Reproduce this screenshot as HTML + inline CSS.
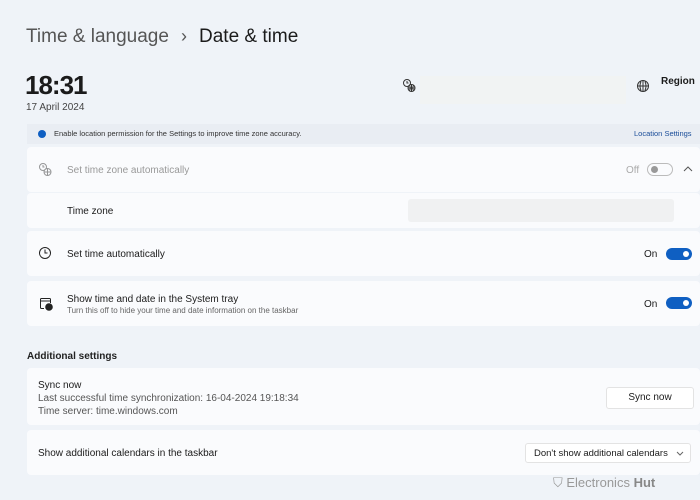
<!DOCTYPE html>
<html><head><style>
body{margin:0;width:700px;height:500px;background:#eff3f8;font-family:"Liberation Sans",sans-serif;position:relative;overflow:hidden;color:#1b1b1b}
.a{position:absolute}
.card{position:absolute;left:27px;width:673px;background:#fafbfd;border-radius:4px}
.t{font-size:10px}
.tog{position:absolute;width:26px;height:12px;border-radius:7px;background:#0f5fc2}
.tog:after{content:"";position:absolute;right:3px;top:3px;width:6px;height:6px;border-radius:50%;background:#fff}
</style></head><body>
<div class="a" style="left:26px;top:26px;font-size:19px;color:#555">Time &amp; language</div>
<div class="a" style="left:181px;top:26px;font-size:18px;color:#555">›</div>
<div class="a" style="left:199px;top:26px;font-size:19px;color:#1b1b1b">Date &amp; time</div>
<div class="a" style="left:25px;top:70px;font-size:26px;font-weight:bold;letter-spacing:-1px">18:31</div>
<div class="a" style="left:26px;top:102px;font-size:10px;color:#444">17 April 2024</div>
<svg class="a" style="left:401px;top:78px" width="16" height="16" viewBox="0 0 16 16" fill="none" stroke="#333" stroke-width="1"><circle cx="6" cy="5" r="3.5"/><path d="M6 3v2h1.5"/><circle cx="10.5" cy="10" r="3.5" fill="#eff3f8"/><path d="M7 10h7M10.5 6.5v7M8.5 7.5q1.5 2.5 0 5M12.5 7.5q-1.5 2.5 0 5"/></svg>
<div class="a" style="left:420px;top:76px;width:206px;height:28px;background:#f1f3f3"></div>
<svg class="a" style="left:636px;top:79px" width="14" height="14" viewBox="0 0 14 14" fill="none" stroke="#333" stroke-width="1"><circle cx="7" cy="7" r="5.5"/><path d="M1.5 7h11M7 1.5v11M5 2.5q-2 4.5 0 9M9 2.5q2 4.5 0 9"/></svg>
<div class="a" style="left:661px;top:76px;font-size:10px;font-weight:bold">Region</div>
<div class="a" style="left:27px;top:124px;width:673px;height:20px;background:#e9edf3"></div>
<div class="a" style="left:38px;top:130px;width:8px;height:8px;border-radius:50%;background:#0f5fc2"></div>
<div class="a" style="left:54px;top:129px;font-size:7.5px;color:#333">Enable location permission for the Settings to improve time zone accuracy.</div>
<div class="a" style="left:634px;top:129px;font-size:7.5px;color:#1a4d99">Location Settings</div>
<div class="card" style="top:147px;height:45px"></div>
<svg class="a" style="left:37px;top:162px;opacity:.5" width="16" height="16" viewBox="0 0 16 16" fill="none" stroke="#333" stroke-width="1"><circle cx="6" cy="5" r="3.5"/><path d="M6 3v2h1.5"/><circle cx="10.5" cy="10" r="3.5" fill="#fafbfd"/><path d="M7 10h7M10.5 6.5v7"/></svg>
<div class="a t" style="left:67px;top:165px;color:#999">Set time zone automatically</div>
<div class="a t" style="left:626px;top:165px;color:#aaa">Off</div>
<div class="a" style="left:647px;top:163px;width:24px;height:11px;border:1px solid #bbb;border-radius:7px"></div>
<div class="a" style="left:651px;top:166px;width:7px;height:7px;border-radius:50%;background:#999"></div>
<svg class="a" style="left:683px;top:166px" width="10" height="6" viewBox="0 0 10 6" fill="none" stroke="#555" stroke-width="1"><path d="M1 5l4-4 4 4"/></svg>
<div class="card" style="top:193px;height:35px"></div>
<div class="a t" style="left:67px;top:206px">Time zone</div>
<div class="a" style="left:408px;top:199px;width:266px;height:23px;background:#f0f1f2;border-radius:3px"></div>
<div class="card" style="top:231px;height:45px"></div>
<svg class="a" style="left:38px;top:246px" width="14" height="14" viewBox="0 0 14 14" fill="none" stroke="#222" stroke-width="1"><circle cx="7" cy="7" r="5.5"/><path d="M7 3.5V7h2.5"/></svg>
<div class="a t" style="left:67px;top:249px">Set time automatically</div>
<div class="a t" style="left:644px;top:249px">On</div>
<div class="tog" style="left:666px;top:248px"></div>
<div class="card" style="top:281px;height:45px"></div>
<svg class="a" style="left:38px;top:296px" width="16" height="16" viewBox="0 0 16 16" fill="none" stroke="#222" stroke-width="1"><path d="M6 12.5H3.5a1 1 0 0 1-1-1v-8a1 1 0 0 1 1-1h8a1 1 0 0 1 1 1V7M2.5 5h10"/><circle cx="11" cy="11" r="3.3" fill="#222"/></svg>
<div class="a t" style="left:67px;top:294px">Show time and date in the System tray</div>
<div class="a" style="left:67px;top:306px;font-size:8px;color:#666">Turn this off to hide your time and date information on the taskbar</div>
<div class="a t" style="left:644px;top:299px">On</div>
<div class="tog" style="left:666px;top:297px"></div>
<div class="a" style="left:27px;top:351px;font-size:10px;font-weight:bold;color:#222">Additional settings</div>
<div class="card" style="top:368px;height:57px"></div>
<div class="a t" style="left:38px;top:380px">Sync now</div>
<div class="a t" style="left:38px;top:393px;color:#555">Last successful time synchronization: 16-04-2024 19:18:34</div>
<div class="a t" style="left:38px;top:406px;color:#555">Time server: time.windows.com</div>
<div class="a" style="left:606px;top:387px;width:86px;height:20px;background:#fff;border:1px solid #e3e3e3;border-radius:3px;font-size:10px;text-align:center;line-height:20px">Sync now</div>
<div class="card" style="top:430px;height:45px"></div>
<div class="a t" style="left:38px;top:448px">Show additional calendars in the taskbar</div>
<div class="a" style="left:525px;top:443px;width:166px;height:20px;background:#fff;border:1px solid #e3e3e3;border-radius:3px;font-size:9.5px;line-height:20px;padding-left:8px;box-sizing:border-box">Don't show additional calendars</div>
<svg class="a" style="left:676px;top:451px" width="8" height="5" viewBox="0 0 8 5" fill="none" stroke="#666" stroke-width="1"><path d="M1 1l3 3 3-3"/></svg>
<div class="a" style="left:553px;top:475px;font-size:13px;color:#999">⛉ Electronics <b style="color:#888">Hut</b></div>
</body></html>
